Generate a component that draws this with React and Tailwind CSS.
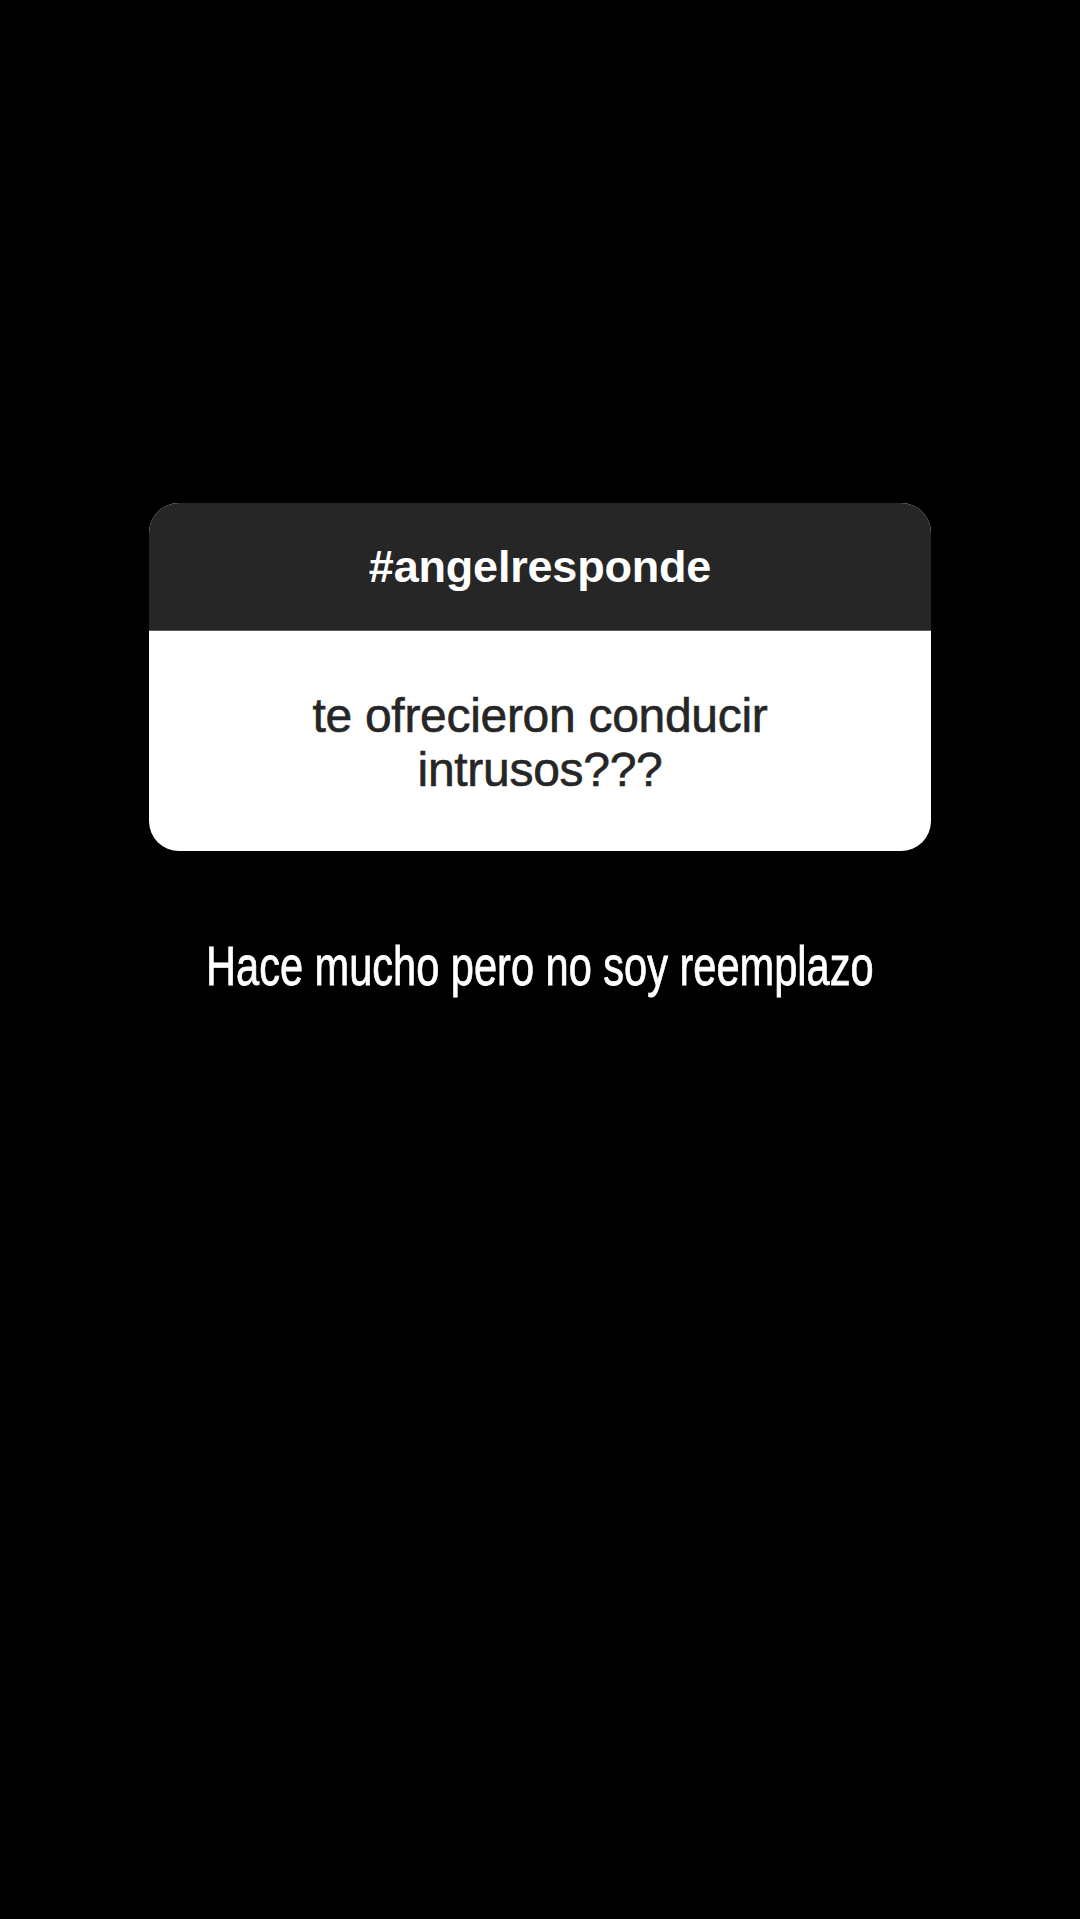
export default function App() {
    return (
        <div className="min-h-[1919px] w-full bg-black flex flex-col items-center pt-[503px]">
            {/* Question sticker */}
            <div className="w-[782px] rounded-[30px] overflow-hidden bg-white">
                <div className="h-[128px] bg-[#262626] border-b border-[#5a5a5a] flex items-center justify-center">
                    <span className="font-['Liberation_Sans',Arial,sans-serif] font-bold text-[45px] leading-none text-white tracking-[-0.2px]">
                        #angelresponde
                    </span>
                </div>
                <div className="h-[220px] flex items-center justify-center pt-[4px]">
                    <p className="text-center font-['Liberation_Sans',Arial,sans-serif] text-[48px] leading-[54px] text-[#262626] tracking-[-0.3px] [-webkit-text-stroke:0.6px_#262626]">
                        te ofrecieron conducir
                        <br />
                        intrusos???
                    </p>
                </div>
            </div>

            {/* Answer */}
            <div className="mt-[83px] w-full flex justify-center">
                <p className="font-['Liberation_Sans',Arial,sans-serif] text-[56px] leading-[64px] text-white whitespace-nowrap scale-x-[0.742] [-webkit-text-stroke:0.8px_#ffffff]">
                    Hace mucho pero no soy reemplazo
                </p>
            </div>
        </div>
    );
}
